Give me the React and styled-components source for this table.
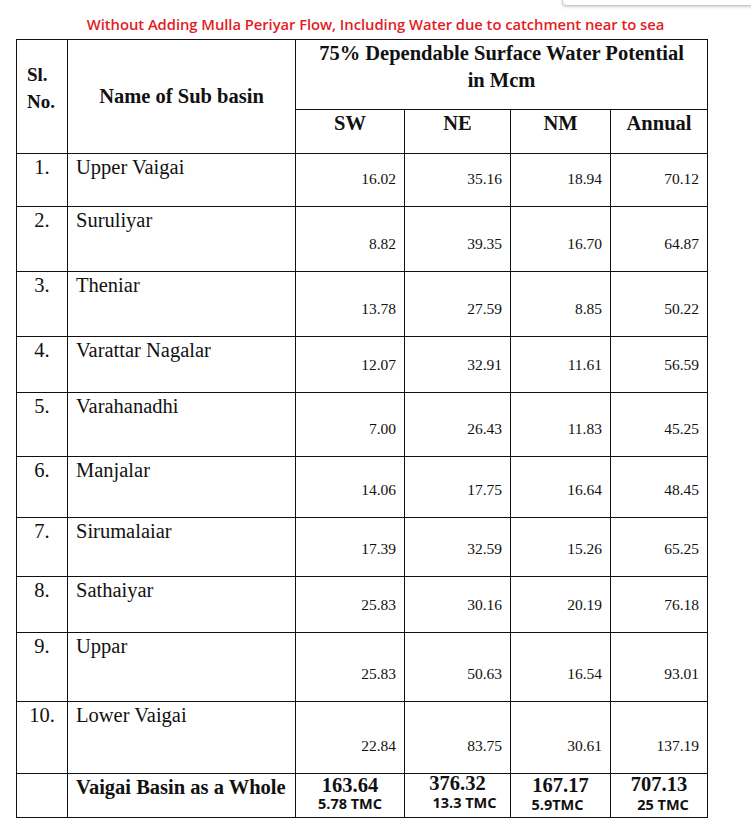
import styled, { createGlobalStyle } from "styled-components";

const GlobalStyle = createGlobalStyle`
  html, body {
    margin: 0;
    padding: 0;
    background: #fff;
  }
`;

const rows = [
  { no: "1.", name: "Upper Vaigai", h: 53, v: ["16.02", "35.16", "18.94", "70.12"] },
  { no: "2.", name: "Suruliyar", h: 65, v: ["8.82", "39.35", "16.70", "64.87"] },
  { no: "3.", name: "Theniar", h: 65, v: ["13.78", "27.59", "8.85", "50.22"] },
  { no: "4.", name: "Varattar Nagalar", h: 56, v: ["12.07", "32.91", "11.61", "56.59"] },
  { no: "5.", name: "Varahanadhi", h: 64, v: ["7.00", "26.43", "11.83", "45.25"] },
  { no: "6.", name: "Manjalar", h: 61, v: ["14.06", "17.75", "16.64", "48.45"] },
  { no: "7.", name: "Sirumalaiar", h: 59, v: ["17.39", "32.59", "15.26", "65.25"] },
  { no: "8.", name: "Sathaiyar", h: 56, v: ["25.83", "30.16", "20.19", "76.18"] },
  { no: "9.", name: "Uppar", h: 69, v: ["25.83", "50.63", "16.54", "93.01"] },
  { no: "10.", name: "Lower Vaigai", h: 72, v: ["22.84", "83.75", "30.61", "137.19"] },
];

const totals = [
  { n: "163.64", tmc: "5.78 TMC", dx: 0, dy: 0, tx: 0, ty: 0 },
  { n: "376.32", tmc: "13.3 TMC", dx: 0, dy: -2, tx: 7, ty: -1 },
  { n: "167.17", tmc: "5.9TMC", dx: 0, dy: 0, tx: -3, ty: 1 },
  { n: "707.13", tmc: "25 TMC", dx: 0, dy: -1, tx: 4, ty: 1 },
];

const Page = styled.div`
  position: relative;
  width: 751px;
  min-height: 836px;
  font-family: "Liberation Serif", "Times New Roman", serif;
  color: #111;
`;

// the corner of a dropdown hanging into the top of the shot
const MenuEdge = styled.div`
  position: absolute;
  top: -4px;
  left: 562px;
  width: 200px;
  height: 8px;
  background: #fff;
  border: 1px solid #c9c9c9;
  border-radius: 4px;
  box-shadow: 0 1px 3px rgba(0, 0, 0, 0.18);
`;

const Title = styled.h2`
  margin: 0 0 5px;
  padding-top: 14px;
  line-height: 20px;
  text-align: center;
  font-family: "Open Sans", "Noto Sans", sans-serif;
  font-size: 14.8px;
  font-weight: 600;
  letter-spacing: -0.05px;
  color: #e41c24;
`;

const Table = styled.table`
  margin-left: 16px;
  width: 691px;
  table-layout: fixed;
  border-collapse: collapse;

  td,
  th {
    border: 1px solid #111;
    padding: 0;
  }
`;

const Row = styled.tr`
  height: ${(p) => p.$h}px;
`;

const HeadCell = styled.th`
  font-size: ${(p) => p.$size || 20.5}px;
  font-weight: 700;
  line-height: 27px;
  text-align: ${(p) => p.$align || "center"};
  vertical-align: ${(p) => p.$valign || "top"};
  padding: ${(p) => p.$pad || "0"} !important;
`;

const NoCell = styled.td`
  text-align: center;
  vertical-align: top;
  font-size: 20.5px;
  line-height: 22px;
  padding-top: 2px !important;
`;

const NameCell = styled.td`
  vertical-align: top;
  font-size: 20.5px;
  font-weight: ${(p) => (p.$bold ? 700 : 400)};
  line-height: 22px;
  padding: 2px 0 0 8px !important;
`;

const ValueCell = styled.td`
  text-align: right;
  vertical-align: bottom;
  font-size: 15.5px;
  line-height: 17px;
  padding: 0 8px 19px 0 !important;
`;

const TotalCell = styled.td`
  text-align: center;
  vertical-align: top;
  padding-top: 1px !important;
`;

const TotalNum = styled.div`
  font-size: 20.5px;
  font-weight: 700;
  line-height: 20px;
  transform: translate(${(p) => p.$dx}px, ${(p) => p.$dy}px);
`;

const Tmc = styled.div`
  font-family: "Open Sans", "Noto Sans", sans-serif;
  font-size: 14.5px;
  font-weight: 700;
  line-height: 16px;
  margin-top: 1px;
  transform: translate(${(p) => p.$dx}px, ${(p) => p.$dy}px);
`;

export default function App() {
  return (
    <Page>
      <GlobalStyle />
      <MenuEdge />
      <Title>
        Without Adding Mulla Periyar Flow, Including Water due to catchment near to sea
      </Title>
      <Table>
        <colgroup>
          <col style={{ width: 51 }} />
          <col style={{ width: 228 }} />
          <col style={{ width: 109 }} />
          <col style={{ width: 106 }} />
          <col style={{ width: 100 }} />
          <col style={{ width: 97 }} />
        </colgroup>
        <thead>
          <Row $h={70}>
            <HeadCell rowSpan={2} $size={19} $align="left" $valign="middle" $pad="0 0 17px 10px">
              Sl.
              <br />
              No.
            </HeadCell>
            <HeadCell rowSpan={2} $valign="middle">
              Name of Sub basin
            </HeadCell>
            <HeadCell colSpan={4}>
              75% Dependable Surface Water Potential
              <br />
              in Mcm
            </HeadCell>
          </Row>
          <Row $h={44}>
            <HeadCell $pad="0">SW</HeadCell>
            <HeadCell $pad="0">NE</HeadCell>
            <HeadCell $pad="0">NM</HeadCell>
            <HeadCell $pad="0">Annual</HeadCell>
          </Row>
        </thead>
        <tbody>
          {rows.map((r) => (
            <Row key={r.no} $h={r.h}>
              <NoCell>{r.no}</NoCell>
              <NameCell>{r.name}</NameCell>
              {r.v.map((v, i) => (
                <ValueCell key={i}>{v}</ValueCell>
              ))}
            </Row>
          ))}
          <Row $h={44}>
            <NoCell />
            <NameCell $bold>Vaigai Basin as a Whole</NameCell>
            {totals.map((t) => (
              <TotalCell key={t.n}>
                <TotalNum $dx={t.dx} $dy={t.dy}>{t.n}</TotalNum>
                <Tmc $dx={t.tx} $dy={t.ty}>{t.tmc}</Tmc>
              </TotalCell>
            ))}
          </Row>
        </tbody>
      </Table>
    </Page>
  );
}
